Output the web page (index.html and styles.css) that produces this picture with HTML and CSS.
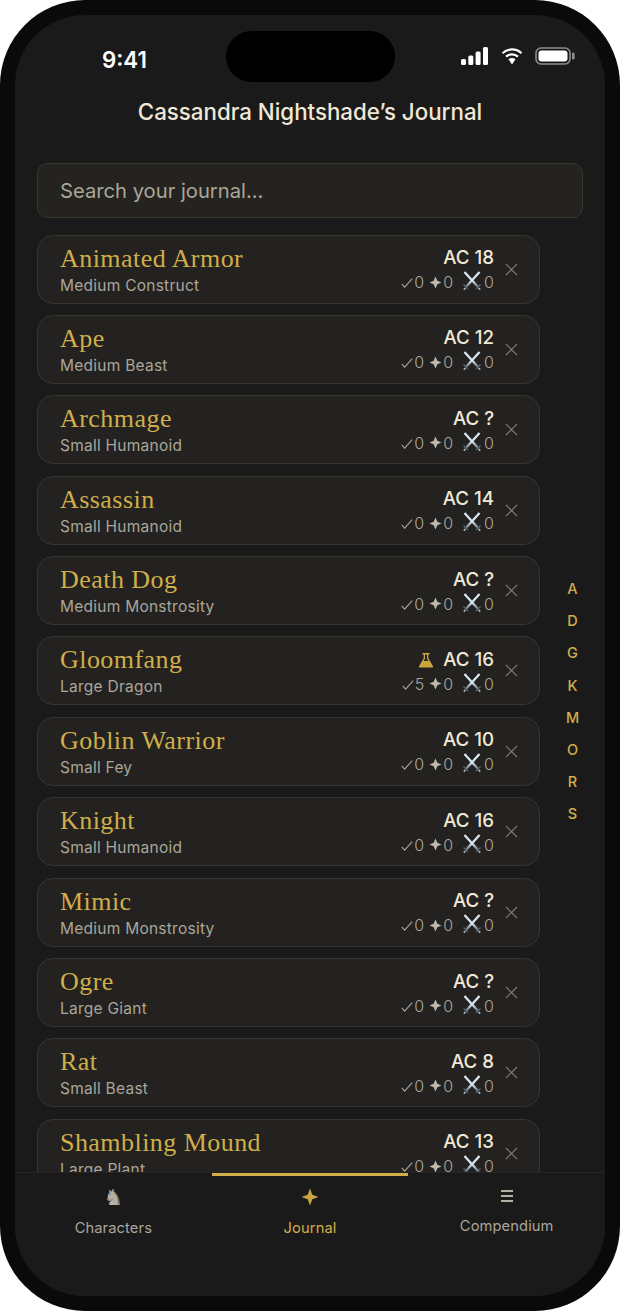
FILE: index.html
```html
<!DOCTYPE html>
<html lang="en">

<head>
    <meta charset="UTF-8">
    <meta name="viewport" content="width=device-width, initial-scale=1.0">
    <title>Journal</title>
    <link rel="stylesheet" href="styles.css">
</head>

<body>
    <svg class="defs" width="0" height="0">
        <defs>
            <linearGradient id="blade" gradientUnits="userSpaceOnUse" x1="0" y1="0" x2="0" y2="20">
                <stop offset="0" stop-color="#dfeaf1"/>
                <stop offset="0.5" stop-color="#d3e2eb"/>
                <stop offset="0.72" stop-color="#7f8f9b"/>
                <stop offset="1" stop-color="#4a525a"/>
            </linearGradient>
            <symbol id="check" viewBox="0 0 12 10">
                <path d="M0.800 5.800L3.600 9.200L11.200 0.600" fill="none" stroke="#a8a396" stroke-width="1.100"/>
            </symbol>
            <symbol id="spark" viewBox="0 0 14 14">
                <path d="M7 0.500L9 5L13.500 7L9 9L7 13.500L5 9L0.500 7L5 5z" fill="#bdb8aa"/>
            </symbol>
            <symbol id="swords" viewBox="0 0 20 20">
                <path d="M17.500 1L3.500 16.500" stroke="url(#blade)" stroke-width="2.300"/>
                <path d="M2.500 1L16.500 16.500" stroke="url(#blade)" stroke-width="2.300"/>
                <path d="M1.500 13.500l4.500 4.500M18.500 13.500l-4.500 4.500" stroke="#5b646c" stroke-width="1.400"/>
                <path d="M1.800 18.600l1.600-1.600M18.200 18.600l-1.600-1.600" stroke="#a9bac6" stroke-width="1.600"/>
            </symbol>
            <symbol id="close" viewBox="0 0 14 14">
                <path d="M1 1l12 12M13 1L1 13" stroke="#87847a" stroke-width="1.200"/>
            </symbol>
        </defs>
    </svg>

    <div class="phone">
        <div class="screen">
            <div class="island"></div>

            <div class="status-bar">
                <span class="time">9:41</span>
                <div class="status-icons">
                    <svg width="27" height="18" viewBox="0 0 27 18">
                        <rect x="0" y="12" width="5" height="6" rx="1.500" fill="#fff"/>
                        <rect x="7.300" y="8.500" width="5" height="9.500" rx="1.500" fill="#fff"/>
                        <rect x="14.600" y="4.500" width="5" height="13.500" rx="1.500" fill="#fff"/>
                        <rect x="22" y="0" width="5" height="18" rx="1.500" fill="#fff"/>
                    </svg>
                    <svg width="22" height="18" viewBox="0 0 22 18">
                        <path d="M1.500 6.200C6.800 1.200 15.200 1.200 20.500 6.200" fill="none" stroke="#fff" stroke-width="2.200"/>
                        <path d="M5 9.600C8.400 6.600 13.600 6.600 17 9.600" fill="none" stroke="#fff" stroke-width="2.200"/>
                        <path d="M7.500 12.200c2-1.600 5-1.600 7 0L11 17.500z" fill="#fff"/>
                    </svg>
                    <svg width="40" height="18" viewBox="0 0 40 18">
                        <rect x="1" y="1" width="34" height="16" rx="5" fill="none" stroke="#8c8c8c" stroke-width="1.600"/>
                        <rect x="3.500" y="3.500" width="29" height="11" rx="3" fill="#fff"/>
                        <rect x="37" y="5.500" width="2.600" height="7" rx="1.300" fill="#8c8c8c"/>
                    </svg>
                </div>
            </div>

            <h1 class="page-title">Cassandra Nightshade’s Journal</h1>

            <div class="search">Search your journal...</div>

            <div class="content">
                <div class="list">
                    <div class="row">
                        <div class="row-main">
                            <div class="name">Animated Armor</div>
                            <div class="kind">Medium Construct</div>
                        </div>
                        <div class="row-stats">
                            <div class="ac">AC 18</div>
                            <div class="counts">
                                <svg class="ic-check"><use href="#check"/></svg><span>0</span>
                                <svg class="ic-spark"><use href="#spark"/></svg><span>0</span>
                                <svg class="ic-swords"><use href="#swords"/></svg><span>0</span>
                            </div>
                        </div>
                        <svg class="ic-close"><use href="#close"/></svg>
                    </div>
                    <div class="row">
                        <div class="row-main">
                            <div class="name">Ape</div>
                            <div class="kind">Medium Beast</div>
                        </div>
                        <div class="row-stats">
                            <div class="ac">AC 12</div>
                            <div class="counts">
                                <svg class="ic-check"><use href="#check"/></svg><span>0</span>
                                <svg class="ic-spark"><use href="#spark"/></svg><span>0</span>
                                <svg class="ic-swords"><use href="#swords"/></svg><span>0</span>
                            </div>
                        </div>
                        <svg class="ic-close"><use href="#close"/></svg>
                    </div>
                    <div class="row">
                        <div class="row-main">
                            <div class="name">Archmage</div>
                            <div class="kind">Small Humanoid</div>
                        </div>
                        <div class="row-stats">
                            <div class="ac">AC ?</div>
                            <div class="counts">
                                <svg class="ic-check"><use href="#check"/></svg><span>0</span>
                                <svg class="ic-spark"><use href="#spark"/></svg><span>0</span>
                                <svg class="ic-swords"><use href="#swords"/></svg><span>0</span>
                            </div>
                        </div>
                        <svg class="ic-close"><use href="#close"/></svg>
                    </div>
                    <div class="row">
                        <div class="row-main">
                            <div class="name">Assassin</div>
                            <div class="kind">Small Humanoid</div>
                        </div>
                        <div class="row-stats">
                            <div class="ac">AC 14</div>
                            <div class="counts">
                                <svg class="ic-check"><use href="#check"/></svg><span>0</span>
                                <svg class="ic-spark"><use href="#spark"/></svg><span>0</span>
                                <svg class="ic-swords"><use href="#swords"/></svg><span>0</span>
                            </div>
                        </div>
                        <svg class="ic-close"><use href="#close"/></svg>
                    </div>
                    <div class="row">
                        <div class="row-main">
                            <div class="name">Death Dog</div>
                            <div class="kind">Medium Monstrosity</div>
                        </div>
                        <div class="row-stats">
                            <div class="ac">AC ?</div>
                            <div class="counts">
                                <svg class="ic-check"><use href="#check"/></svg><span>0</span>
                                <svg class="ic-spark"><use href="#spark"/></svg><span>0</span>
                                <svg class="ic-swords"><use href="#swords"/></svg><span>0</span>
                            </div>
                        </div>
                        <svg class="ic-close"><use href="#close"/></svg>
                    </div>
                    <div class="row">
                        <div class="row-main">
                            <div class="name">Gloomfang</div>
                            <div class="kind">Large Dragon</div>
                        </div>
                        <div class="row-stats">
                            <div class="ac">
                                <svg class="ic-flask" viewBox="0 0 16 16">
                                    <path d="M4.500 1h7v1.600h-1.200v3.600L15 14.200c.4.800-.1 1.300-.8 1.300H1.800c-.7 0-1.200-.5-.8-1.300L5.700 6.200V2.600H4.500z" fill="#c9a640"/>
                                    <path d="M7 2.600h2v4l1.300 2.400H5.700L7 6.600z" fill="#232220"/>
                                </svg>
                                AC 16
                            </div>
                            <div class="counts">
                                <svg class="ic-check"><use href="#check"/></svg><span>5</span>
                                <svg class="ic-spark"><use href="#spark"/></svg><span>0</span>
                                <svg class="ic-swords"><use href="#swords"/></svg><span>0</span>
                            </div>
                        </div>
                        <svg class="ic-close"><use href="#close"/></svg>
                    </div>
                    <div class="row">
                        <div class="row-main">
                            <div class="name">Goblin Warrior</div>
                            <div class="kind">Small Fey</div>
                        </div>
                        <div class="row-stats">
                            <div class="ac">AC 10</div>
                            <div class="counts">
                                <svg class="ic-check"><use href="#check"/></svg><span>0</span>
                                <svg class="ic-spark"><use href="#spark"/></svg><span>0</span>
                                <svg class="ic-swords"><use href="#swords"/></svg><span>0</span>
                            </div>
                        </div>
                        <svg class="ic-close"><use href="#close"/></svg>
                    </div>
                    <div class="row">
                        <div class="row-main">
                            <div class="name">Knight</div>
                            <div class="kind">Small Humanoid</div>
                        </div>
                        <div class="row-stats">
                            <div class="ac">AC 16</div>
                            <div class="counts">
                                <svg class="ic-check"><use href="#check"/></svg><span>0</span>
                                <svg class="ic-spark"><use href="#spark"/></svg><span>0</span>
                                <svg class="ic-swords"><use href="#swords"/></svg><span>0</span>
                            </div>
                        </div>
                        <svg class="ic-close"><use href="#close"/></svg>
                    </div>
                    <div class="row">
                        <div class="row-main">
                            <div class="name">Mimic</div>
                            <div class="kind">Medium Monstrosity</div>
                        </div>
                        <div class="row-stats">
                            <div class="ac">AC ?</div>
                            <div class="counts">
                                <svg class="ic-check"><use href="#check"/></svg><span>0</span>
                                <svg class="ic-spark"><use href="#spark"/></svg><span>0</span>
                                <svg class="ic-swords"><use href="#swords"/></svg><span>0</span>
                            </div>
                        </div>
                        <svg class="ic-close"><use href="#close"/></svg>
                    </div>
                    <div class="row">
                        <div class="row-main">
                            <div class="name">Ogre</div>
                            <div class="kind">Large Giant</div>
                        </div>
                        <div class="row-stats">
                            <div class="ac">AC ?</div>
                            <div class="counts">
                                <svg class="ic-check"><use href="#check"/></svg><span>0</span>
                                <svg class="ic-spark"><use href="#spark"/></svg><span>0</span>
                                <svg class="ic-swords"><use href="#swords"/></svg><span>0</span>
                            </div>
                        </div>
                        <svg class="ic-close"><use href="#close"/></svg>
                    </div>
                    <div class="row">
                        <div class="row-main">
                            <div class="name">Rat</div>
                            <div class="kind">Small Beast</div>
                        </div>
                        <div class="row-stats">
                            <div class="ac">AC 8</div>
                            <div class="counts">
                                <svg class="ic-check"><use href="#check"/></svg><span>0</span>
                                <svg class="ic-spark"><use href="#spark"/></svg><span>0</span>
                                <svg class="ic-swords"><use href="#swords"/></svg><span>0</span>
                            </div>
                        </div>
                        <svg class="ic-close"><use href="#close"/></svg>
                    </div>
                    <div class="row">
                        <div class="row-main">
                            <div class="name">Shambling Mound</div>
                            <div class="kind">Large Plant</div>
                        </div>
                        <div class="row-stats">
                            <div class="ac">AC 13</div>
                            <div class="counts">
                                <svg class="ic-check"><use href="#check"/></svg><span>0</span>
                                <svg class="ic-spark"><use href="#spark"/></svg><span>0</span>
                                <svg class="ic-swords"><use href="#swords"/></svg><span>0</span>
                            </div>
                        </div>
                        <svg class="ic-close"><use href="#close"/></svg>
                    </div>
                </div>

                <div class="alpha">
                    <span>A</span>
                    <span>D</span>
                    <span>G</span>
                    <span>K</span>
                    <span>M</span>
                    <span>O</span>
                    <span>R</span>
                    <span>S</span>
                </div>
            </div>

            <div class="tabs">
                <div class="tab tab-chars">
                    <span class="tab-knight">♞</span>
                    <span class="tab-label">Characters</span>
                </div>
                <div class="tab tab-active">
                    <svg class="tab-star" viewBox="0 0 18 18">
                        <path d="M9 0.500L11.300 6.700L17.500 9L11.300 11.300L9 17.500L6.700 11.300L0.500 9L6.700 6.700z" fill="#c9a640"/>
                    </svg>
                    <span class="tab-label">Journal</span>
                </div>
                <div class="tab tab-comp">
                    <svg class="tab-menu" viewBox="0 0 14 14">
                        <path d="M1 2h12M1 7h12M1 12h12" stroke="#b5b0a3" stroke-width="1.800"/>
                    </svg>
                    <span class="tab-label">Compendium</span>
                </div>
            </div>
        </div>
    </div>
</body>
</html>
```

FILE: styles.css
```css
:root {
    --screen: #1a1a1a;
    --card: #232220;
    --border: #38352d;
    --gold: #d0ae4a;
    --text: #f0e8d6;
    --muted: #aaa69a;
}

body {
    margin: 0;
    background: #fff;
    font-family: 'Inter', 'Liberation Sans', sans-serif;
    overflow: hidden;
}

.defs {
    position: absolute;
}

.phone {
    width: 620px;
    height: 1311px;
    box-sizing: border-box;
    padding: 15px;
    background: #0a0a0b;
    border-radius: 85px;
}

.screen {
    position: relative;
    height: 100%;
    display: flex;
    flex-direction: column;
    background: var(--screen);
    border-radius: 70px;
    overflow: hidden;
}

.island {
    position: absolute;
    top: 16px;
    left: 211px;
    width: 169px;
    height: 51px;
    background: #000;
    border-radius: 26px;
}

.status-bar {
    display: flex;
    justify-content: space-between;
    align-items: center;
    height: 26px;
    margin-top: 31px;
    padding: 0 30px 0 87px;
}

.time {
    color: #fff;
    font-size: 22.3px;
    font-weight: 600;
}

.status-icons {
    display: flex;
    align-items: center;
    gap: 12.5px;
    margin-top: -6px;
}

.page-title {
    margin: 27px 0 0;
    color: var(--text);
    font-size: 22.3px;
    font-weight: 500;
    line-height: 26px;
    text-align: center;
}

.search {
    margin: 38px 22px 0;
    height: 53px;
    padding-left: 22px;
    line-height: 53px;
    color: var(--muted);
    font-size: 20.2px;
    background: #24231f;
    border: 1px solid var(--border);
    border-radius: 10px;
}

.content {
    flex: 1;
    min-height: 0;
    display: flex;
    margin-top: 16.5px;
    padding-left: 22px;
    overflow: hidden;
}

.list {
    width: 503px;
    flex: none;
    display: flex;
    flex-direction: column;
    gap: 11.4px;
}

.row {
    flex: none;
    box-sizing: border-box;
    height: 69px;
    display: flex;
    align-items: center;
    padding: 0 21px 0 22px;
    background: var(--card);
    border: 1px solid var(--border);
    border-radius: 16px;
}

.row-main {
    flex: 1;
    min-width: 0;
}

.name {
    color: var(--gold);
    font-family: 'Liberation Serif', serif;
    font-size: 26px;
    line-height: 30px;
    letter-spacing: 0.45px;
}

.kind {
    margin-top: 2px;
    color: var(--muted);
    font-size: 15.5px;
    line-height: 19px;
    letter-spacing: 0.25px;
}

.row-stats {
    display: flex;
    flex-direction: column;
    align-items: flex-end;
    padding-top: 2px;
}

.ac {
    display: flex;
    align-items: center;
    gap: 9px;
    color: var(--text);
    font-size: 18.7px;
    font-weight: 500;
    line-height: 22px;
}

.counts {
    display: flex;
    align-items: center;
    margin-top: 2px;
    height: 22px;
    color: var(--muted);
    font-size: 16px;
    font-weight: 300;
}

.ic-check {
    width: 12px;
    height: 10px;
    margin-top: 2px;
    margin-right: 1px;
}

.ic-spark {
    width: 13px;
    height: 13px;
    margin-left: 5px;
    margin-right: 1px;
}

.ic-swords {
    width: 20px;
    height: 20px;
    margin: -2px 2px 0 9px;
}

.ic-close {
    flex: none;
    width: 13px;
    height: 13px;
    margin-left: 11px;
}

.ic-flask {
    width: 16px;
    height: 16px;
}

.alpha {
    flex: 1;
    align-self: center;
    display: flex;
    flex-direction: column;
    align-items: center;
    gap: 13px;
    margin-top: -4px;
    color: var(--gold);
    font-size: 14.5px;
    font-weight: 500;
    line-height: 19.2px;
}

.tabs {
    position: relative;
    flex: none;
    display: flex;
    height: 123px;
    background: var(--screen);
    border-top: 1px solid #262522;
}

.tab {
    flex: 1;
    display: flex;
    flex-direction: column;
    align-items: center;
    color: var(--muted);
    font-size: 14.7px;
    letter-spacing: 0.1px;
}

.tab-active {
    color: var(--gold);
    box-shadow: 0 3px 0 0 var(--gold) inset;
}

.tab-label {
    line-height: 18px;
}

.tab-chars .tab-label {
    margin-top: 7px;
}

.tab-active .tab-label {
    margin-top: 13px;
}

.tab-comp .tab-label {
    margin-top: 14px;
}

.tab-knight {
    margin-top: 11px;
    color: #b5b0a3;
    font-family: 'DejaVu Sans', sans-serif;
    font-size: 22px;
    line-height: 28px;
}

.tab-star {
    width: 18px;
    height: 18px;
    margin-top: 15px;
}

.tab-menu {
    width: 14px;
    height: 14px;
    margin-top: 16px;
}
```
